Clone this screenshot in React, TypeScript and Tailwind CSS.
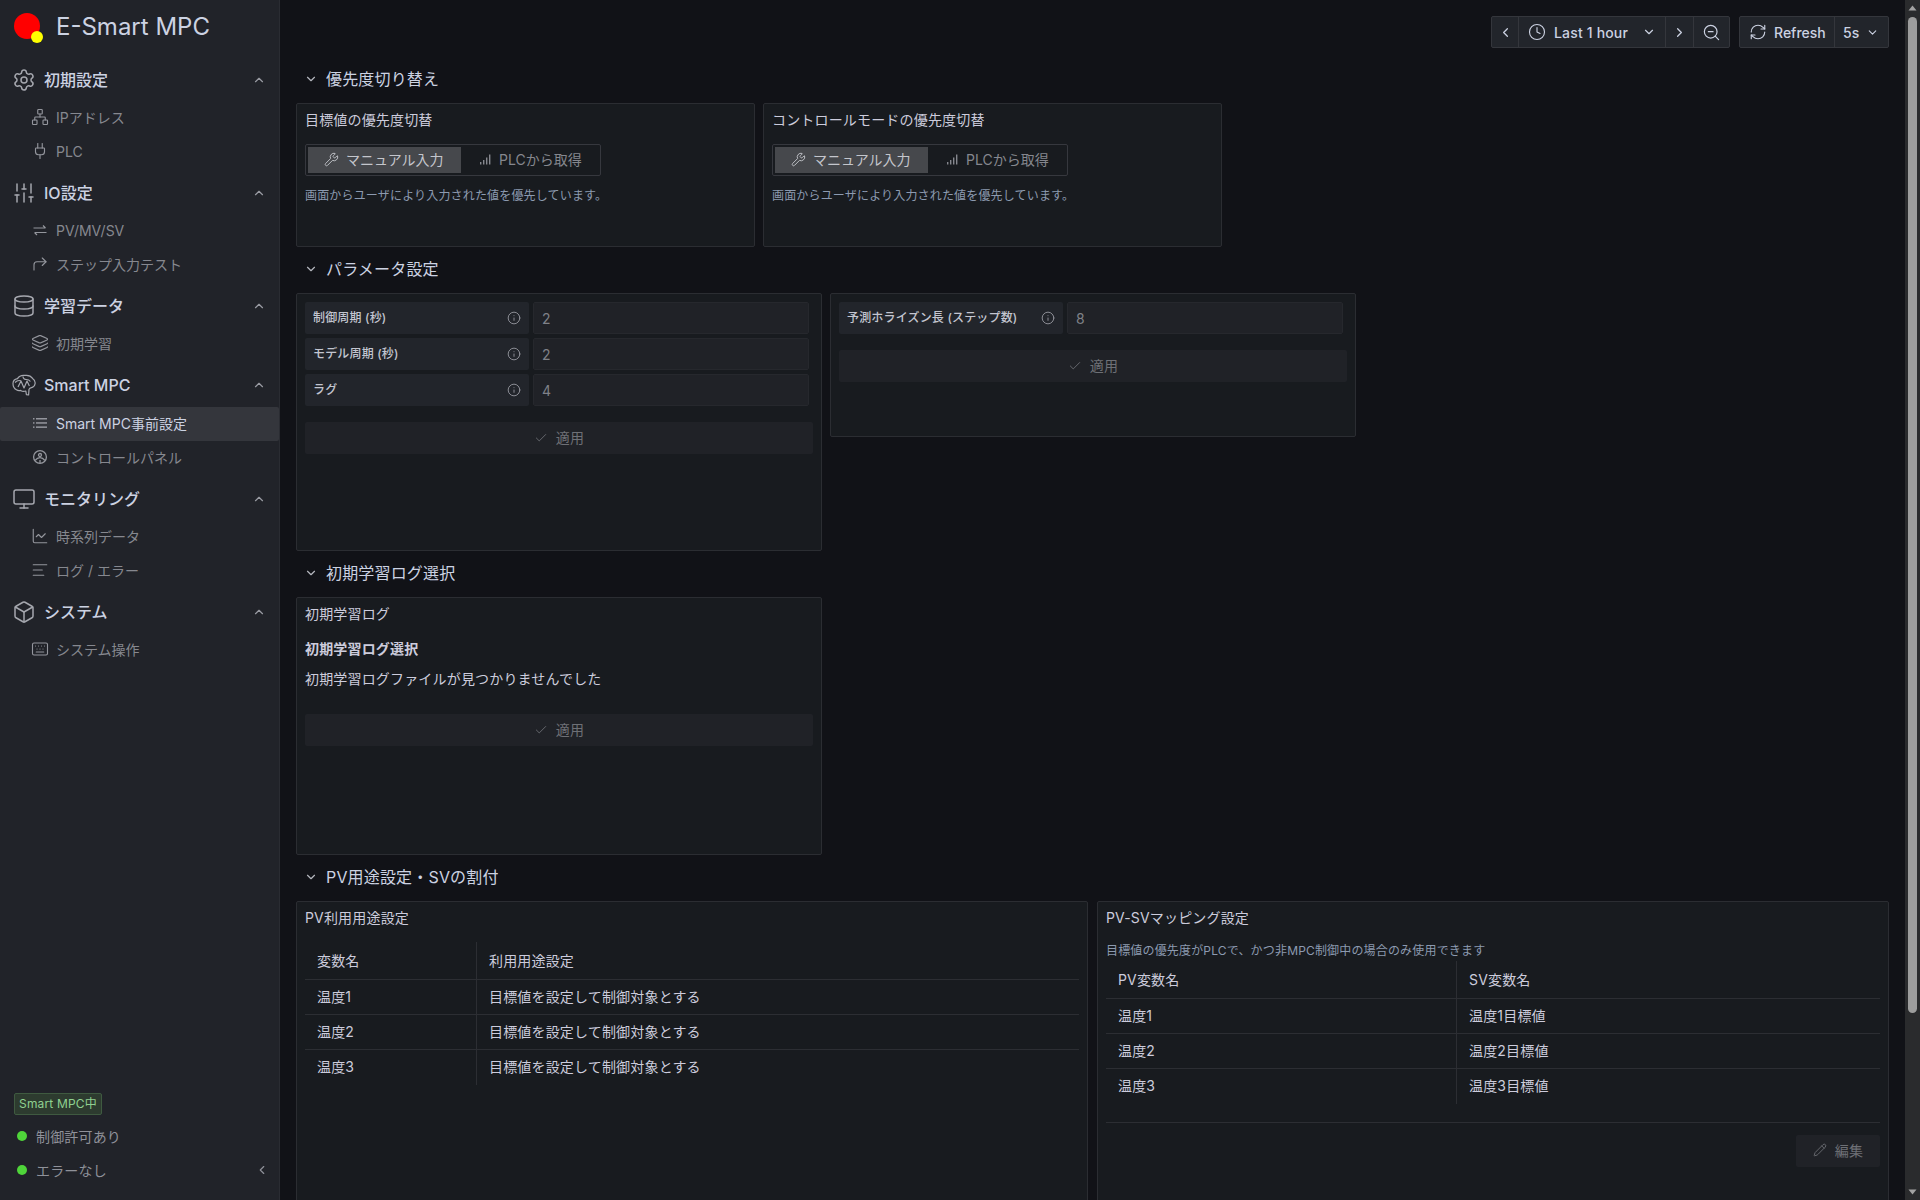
import type { ReactNode } from "react";
import {
  AlignLeft, Box, ChartLine, Check, ChevronDown, ChevronLeft, ChevronRight, ChevronUp, Clock,
  CornerUpRight, Database, Info, Keyboard, Layers, Monitor, Network, Pencil, Plug,
  RefreshCw, Settings, SlidersVertical, Wrench, ZoomOut,
} from "lucide-react";

type NavGroup = {
  label: string;
  icon: ReactNode;
  listClass?: string;
  items: { label: string; icon: ReactNode; active?: boolean }[];
};

const big = "w-[24px] h-[24px] stroke-[1.5]";
const small = "w-[18px] h-[18px] stroke-[1.5]";

function ExchangeIcon() {
  return (
    <svg viewBox="0 0 16 16" className="w-[16px] h-[16px]" fill="none" stroke="currentColor" strokeWidth="1.2">
      <path d="M1.5 6h12M11 3.5 13.5 6" />
      <path d="M14.5 10.5h-12M5 13 2.5 10.5" />
    </svg>
  );
}

function ListDotsIcon() {
  return (
    <svg viewBox="0 0 16 16" className="w-[16px] h-[16px]" fill="currentColor">
      <rect x="1" y="3" width="1.5" height="1.5" />
      <rect x="1" y="7.2" width="1.5" height="1.5" />
      <rect x="1" y="11.4" width="1.5" height="1.5" />
      <rect x="4" y="3" width="11" height="1.5" />
      <rect x="4" y="7.2" width="11" height="1.5" />
      <rect x="4" y="11.4" width="11" height="1.5" />
    </svg>
  );
}

function DialIcon() {
  return (
    <svg viewBox="0 0 16 16" className="w-[16px] h-[16px]" fill="none" stroke="currentColor" strokeWidth="1.3">
      <circle cx="8" cy="8" r="6.4" />
      <circle cx="8" cy="6" r="1.5" />
      <path d="M3.2 11.4 C4.6 9.4 6 8.6 8 8.6 C10 8.6 11.4 9.4 12.8 11.4" />
      <path d="M8 11v3" />
    </svg>
  );
}

function BrainHeadIcon() {
  return (
    <svg viewBox="0 0 24 22" className="w-[24px] h-[22px]" fill="none" stroke="currentColor" strokeWidth="1.2" strokeLinejoin="round">
      <path d="M1 9.5C1 6.5 3.5 5 5.5 4.6 7 2 10 1 13 1.4c3-.4 6 .6 7.6 3 1.8 1.2 2.9 3.2 2.4 5.6-.4 2-1.8 3.4-3.6 3.6-1 .2-2 .8-2.4 1.8l-.4 5.6-2.2-.4-.6-3.6c-1.8.6-3.6.4-5.2-.6-1.4.4-3 .2-4.2-.6C2.2 14.6 1 12 1 9.5Z" />
      <path d="M3 8.5c2-2 4-2.4 6-1.6M6 13l3-6 3 7 3-7 2.4 5M11 2.5c0 2 1.6 3 3.4 3 1.6 0 3 .6 4 2" />
    </svg>
  );
}

const groups: NavGroup[] = [
  {
    label: "初期設定",
    icon: <Settings className={big} />,
    items: [
      { label: "IPアドレス", icon: <Network className={small} /> },
      { label: "PLC", icon: <Plug className={small} /> },
    ],
  },
  {
    label: "IO設定",
    icon: <SlidersVertical className={big} />,
    items: [
      { label: "PV/MV/SV", icon: <ExchangeIcon /> },
      { label: "ステップ入力テスト", icon: <CornerUpRight className={small} /> },
    ],
  },
  {
    label: "学習データ",
    icon: <Database className={big} />,
    items: [{ label: "初期学習", icon: <Layers className={small} /> }],
  },
  {
    label: "Smart MPC",
    icon: <BrainHeadIcon />,
    listClass: "mt-[1px]",
    items: [
      { label: "Smart MPC事前設定", icon: <ListDotsIcon />, active: true },
      { label: "コントロールパネル", icon: <DialIcon /> },
    ],
  },
  {
    label: "モニタリング",
    icon: <Monitor className={big} />,
    items: [
      { label: "時系列データ", icon: <ChartLine className={small} /> },
      { label: "ログ / エラー", icon: <AlignLeft className={small} /> },
    ],
  },
  {
    label: "システム",
    icon: <Box className={big} />,
    items: [{ label: "システム操作", icon: <Keyboard className={small} /> }],
  },
];

function Sidebar() {
  return (
    <aside className="w-[280px] shrink-0 h-full flex flex-col bg-[#212329] border-r border-[#2a2c32]">
      <div className="h-[59px] flex items-start">
        <svg viewBox="0 0 44 44" className="w-[44px] h-[44px] ml-[11px] mt-[9px] shrink-0">
          <circle cx="16" cy="17" r="13" fill="#ff0000" />
          <circle cx="26" cy="28" r="6" fill="#ffff00" />
        </svg>
        <span className="ml-[1px] mt-[10px] text-[24px] leading-[34px] tracking-normal text-[#ccd2e2]">E-Smart MPC</span>
      </div>
      <nav className="flex flex-col gap-[3px]">
        {groups.map((g) => (
          <div key={g.label}>
            <div className="h-[42px] flex items-center pl-[12px] pr-[13px] text-[#ccd2e2]">
              <span className="w-[24px] flex justify-center text-[#a5a7ae]">{g.icon}</span>
              <span className="ml-[8px] flex-1 text-[16px] font-medium tracking-normal">{g.label}</span>
              <ChevronUp className="w-[14px] h-[14px] text-[#9a9ca3]" />
            </div>
            <div className={g.listClass}>
              {g.items.map((it) => (
                <div
                  key={it.label}
                  className={
                    it.active
                      ? "h-[34px] flex items-center pl-[31px] pb-[2px] rounded-[2px] bg-[#34363c] text-[#ccd2e2]"
                      : "h-[34px] flex items-center pl-[31px] pb-[2px] text-[#86888f]"
                  }
                >
                  <span className="w-[18px] flex justify-center text-[#94969d]">{it.icon}</span>
                  <span className="ml-[7px] text-[14px] tracking-normal">{it.label}</span>
                </div>
              ))}
            </div>
          </div>
        ))}
      </nav>
      <div className="mt-auto pb-[12px]">
        <div className="ml-[14px] mb-[5px] w-[88px] h-[22px] flex items-center justify-center rounded-[2px] border border-[#3f5a40] bg-[#2d3b2f] text-[12px] text-[#8fd08f]">
          Smart MPC中
        </div>
        <div className="h-[34px] flex items-center pl-[17px] pb-[2px] text-[14px] text-[#8f9199]">
          <span className="w-[10px] h-[10px] rounded-full bg-[#4fd53a]" />
          <span className="ml-[9px]">制御許可あり</span>
        </div>
        <div className="h-[34px] flex items-center pl-[17px] pr-[10px] pb-[2px] text-[14px] text-[#8f9199]">
          <span className="w-[10px] h-[10px] rounded-full bg-[#4fd53a]" />
          <span className="ml-[9px] flex-1">エラーなし</span>
          <ChevronLeft className="w-[14px] h-[14px]" />
        </div>
      </div>
    </aside>
  );
}

function Toolbar() {
  return (
    <div className="flex justify-end gap-[9px] text-[14px] font-medium text-[#ccd2e2]">
      <div className="h-[32px] flex rounded-[2px] border border-[#34363c] bg-[#22252b] divide-x divide-[#34363c]">
        <div className="w-[27px] flex items-center justify-center"><ChevronLeft className="w-[15px] h-[15px]" /></div>
        <div className="w-[147px] flex items-center pl-[9px] pr-[9px]">
          <Clock className="w-[18px] h-[18px] stroke-[1.5]" />
          <span className="ml-[8px] flex-1">Last 1 hour</span>
          <ChevronDown className="w-[14px] h-[14px]" />
        </div>
        <div className="w-[28px] flex items-center justify-center"><ChevronRight className="w-[15px] h-[15px]" /></div>
        <div className="w-[35px] flex items-center justify-center"><ZoomOut className="w-[19px] h-[19px] stroke-[1.5]" /></div>
      </div>
      <div className="h-[32px] flex rounded-[2px] border border-[#34363c] bg-[#22252b] divide-x divide-[#34363c]">
        <div className="w-[95px] flex items-center pl-[9px]">
          <RefreshCw className="w-[18px] h-[18px] stroke-[1.5]" />
          <span className="ml-[7px] tracking-normal">Refresh</span>
        </div>
        <div className="w-[53px] flex items-center pl-[8px]">
          <span className="flex-1">5s</span>
          <ChevronDown className="w-[13px] h-[13px] mr-[9px]" />
        </div>
      </div>
    </div>
  );
}

function Section({ title, gapClass, children }: { title: string; gapClass: string; children: ReactNode }) {
  return (
    <section>
      <div className="h-[30px] mb-[9px] flex items-center pl-[8px] text-[#ccd2e2]">
        <ChevronDown className="w-[14px] h-[14px] text-[#b5b7be]" />
        <span className="ml-[8px] text-[16px]">{title}</span>
      </div>
      <div className={`flex ${gapClass}`}>{children}</div>
    </section>
  );
}

function Panel({ className, title, children }: { className: string; title?: string; children: ReactNode }) {
  return (
    <div className={`shrink-0 rounded-[2px] border border-[#2b2d32] bg-[#181b1f] px-[8px] overflow-hidden ${className}`}>
      {title ? <div className="h-[32px] pb-[2px] flex items-center text-[14px] text-[#ccccdc]">{title}</div> : null}
      {children}
    </div>
  );
}

function SignalIcon() {
  return (
    <svg viewBox="0 0 14 14" className="w-[14px] h-[14px]" fill="currentColor">
      <rect x="2" y="10" width="1.4" height="2.5" />
      <rect x="5" y="8" width="1.4" height="4.5" />
      <rect x="8" y="5.5" width="1.4" height="7" />
      <rect x="11" y="2.5" width="1.4" height="10" />
    </svg>
  );
}

function PriorityPanel({ className, title }: { className: string; title: string }) {
  return (
    <Panel className={className} title={title}>
      <div className="mt-[8px] w-[296px] h-[32px] flex items-center px-[2px] rounded-[2px] border border-[#36383e] text-[14px]">
        <div className="w-[153px] h-[26px] flex items-center pl-[16px] pb-[2px] bg-[#46484c] text-[#c4c6cc]">
          <Wrench className="w-[15px] h-[15px] stroke-[1.5]" />
          <span className="ml-[7px] tracking-normal">マニュアル入力</span>
        </div>
        <div className="h-[26px] flex items-center pl-[17px] pb-[2px] text-[#85878e]">
          <SignalIcon />
          <span className="ml-[7px] tracking-normal">PLCから取得</span>
        </div>
      </div>
      <p className="mt-[12px] text-[12px] leading-[16px] text-[#8c9ab0]">画面からユーザにより入力された値を優先しています。</p>
    </Panel>
  );
}

function Field({ label, value, labelClass }: { label: string; value: string; labelClass: string }) {
  return (
    <div className="h-[32px] flex gap-[4px] pr-[4px]">
      <div className={`${labelClass} shrink-0 flex items-center pl-[8px] pr-[8px] rounded-[2px] bg-[#22252b] text-[12px] font-medium text-[#c3c5d0]`}>
        <span className="flex-1">{label}</span>
        <Info className="w-[14px] h-[14px] stroke-[1.5] text-[#9a9ca3]" />
      </div>
      <div className="flex-1 flex items-center pl-[8px] rounded-[2px] border border-[#26282d] bg-[#202227] text-[14px] text-[#7f8188]">
        {value}
      </div>
    </div>
  );
}

function ApplyButton({ className }: { className: string }) {
  return (
    <div className={`${className} h-[32px] flex items-center justify-center gap-[8px] pb-[2px] rounded-[2px] bg-[#202227] text-[14px] text-[#6e7076]`}>
      <Check className="w-[14px] h-[14px] stroke-[1.5] mt-[2px]" />
      <span>適用</span>
    </div>
  );
}

function DataTable({ firstCol, head, rows }: { firstCol: string; head: [string, string]; rows: [string, string][] }) {
  return (
    <div className="text-[14px] text-[#ccccdc]">
      <div className="h-[38px] flex border-b border-[#2c2e33]">
        <div className={`${firstCol} shrink-0 flex items-center pl-[12px] border-r border-[#2c2e33]`}>{head[0]}</div>
        <div className="flex items-center pl-[12px]">{head[1]}</div>
      </div>
      {rows.map((r, i) => (
        <div key={r[0]} className={i < rows.length - 1 ? "h-[35px] flex border-b border-[#2c2e33]" : "h-[35px] flex"}>
          <div className={`${firstCol} shrink-0 flex items-center pl-[12px] pb-[2px] border-r border-[#2c2e33]`}>{r[0]}</div>
          <div className="flex items-center pl-[12px] pb-[2px]">{r[1]}</div>
        </div>
      ))}
    </div>
  );
}

const usage = "目標値を設定して制御対象とする";

export default function App() {
  return (
    <div className="w-[1920px] h-[1200px] overflow-hidden flex bg-[#111217] tracking-[0.01071em] font-['Inter','Noto_Sans_CJK_JP',sans-serif]">
      <Sidebar />
      <main className="flex-1 min-w-0 pt-[16px] pl-[16px] pr-[16px]">
        <Toolbar />
        <div className="mt-[16px] flex flex-col gap-[7px]">
          <Section title="優先度切り替え" gapClass="gap-[8px]">
            <PriorityPanel className="w-[459px] h-[144px]" title="目標値の優先度切替" />
            <PriorityPanel className="w-[459px] h-[144px]" title="コントロールモードの優先度切替" />
          </Section>
          <Section title="パラメータ設定" gapClass="gap-[8px]">
            <Panel className="w-[526px] h-[258px] pt-[8px]">
              <div className="flex flex-col gap-[4px]">
                <Field label="制御周期 (秒)" value="2" labelClass="w-[224px]" />
                <Field label="モデル周期 (秒)" value="2" labelClass="w-[224px]" />
                <Field label="ラグ" value="4" labelClass="w-[224px]" />
              </div>
              <ApplyButton className="mt-[16px]" />
            </Panel>
            <Panel className="w-[526px] h-[144px] pt-[8px]">
              <Field label="予測ホライズン長 (ステップ数)" value="8" labelClass="w-[224px]" />
              <ApplyButton className="mt-[16px]" />
            </Panel>
          </Section>
          <Section title="初期学習ログ選択" gapClass="gap-[8px]">
            <Panel className="w-[526px] h-[258px]" title="初期学習ログ">
              <div className="mt-[9px] text-[14px] leading-[20px] font-semibold text-[#ccccdc]">初期学習ログ選択</div>
              <div className="mt-[10px] text-[14px] leading-[20px] text-[#ccccdc]">初期学習ログファイルが見つかりませんでした</div>
              <ApplyButton className="mt-[25px]" />
            </Panel>
          </Section>
          <Section title="PV用途設定・SVの割付" gapClass="gap-[9px]">
            <Panel className="flex-1 h-[400px]" title="PV利用用途設定">
              <div className="mt-[8px]">
                <DataTable
                  firstCol="w-[172px]"
                  head={["変数名", "利用用途設定"]}
                  rows={[["温度1", usage], ["温度2", usage], ["温度3", usage]]}
                />
              </div>
            </Panel>
            <Panel className="flex-1 h-[400px]" title="PV-SVマッピング設定">
              <p className="mt-[9px] mb-[2px] text-[12px] leading-[16px] text-[#8c9ab0]">目標値の優先度がPLCで、かつ非MPC制御中の場合のみ使用できます</p>
              <DataTable
                firstCol="w-[351px]"
                head={["PV変数名", "SV変数名"]}
                rows={[["温度1", "温度1目標値"], ["温度2", "温度2目標値"], ["温度3", "温度3目標値"]]}
              />
              <div className="mt-[18px] border-t border-[#2c2e33] pt-[12px] flex justify-end">
                <div className="w-[84px] h-[32px] flex items-center justify-center gap-[8px] pb-[2px] rounded-[2px] bg-[#202227] text-[14px] text-[#6e7076]">
                  <Pencil className="w-[14px] h-[14px] stroke-[1.5]" />
                  <span>編集</span>
                </div>
              </div>
            </Panel>
          </Section>
        </div>
      </main>
      <div className="w-[15px] shrink-0 h-full flex flex-col items-center bg-[#2a2b2d]">
        <svg viewBox="0 0 15 17" className="w-[15px] h-[17px] shrink-0"><path d="M3.5 10.5h8L7.5 5.5z" fill="#a3a3a3" /></svg>
        <div className="w-[9px] h-[996px] rounded-[5px] bg-[#9d9d9d]" />
        <div className="flex-1" />
        <svg viewBox="0 0 15 17" className="w-[15px] h-[17px] shrink-0"><path d="M3.5 6.5h8l-4 5z" fill="#a3a3a3" /></svg>
      </div>
    </div>
  );
}
